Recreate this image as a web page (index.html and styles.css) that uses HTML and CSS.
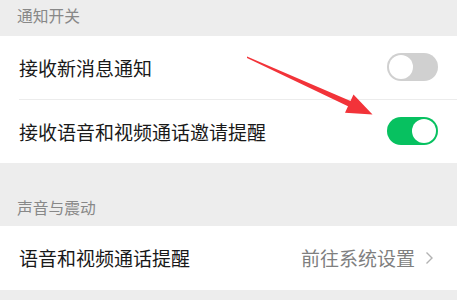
FILE: index.html
```html
<!DOCTYPE html>
<html lang="zh-CN">
<head>
  <meta charset="UTF-8">
  <title>新消息通知</title>
  <link rel="stylesheet" href="styles.css">
</head>
<body>
  <div class="page">
    <div class="section-title first">通知开关</div>
    <div class="group">
      <div class="row">
        <span class="label">接收新消息通知</span>
        <span class="switch"></span>
      </div>
      <div class="row">
        <span class="label">接收语音和视频通话邀请提醒</span>
        <span class="switch on"></span>
      </div>
    </div>

    <div class="section-title">声音与震动</div>
    <div class="group">
      <div class="row">
        <span class="label">语音和视频通话提醒</span>
        <span class="value">前往系统设置
          <svg class="chevron" width="9" height="14" viewBox="0 0 9 14">
            <path d="M1.5 1.5 L7 7 L1.5 12.5" fill="none" stroke="#b2b2b2" stroke-width="1.4"/>
          </svg>
        </span>
      </div>
    </div>

    <svg class="arrow" width="457" height="300" viewBox="0 0 457 300">
      <polygon points="247,56.5 350.5,100.9 353.5,94.5 372.5,114.5 345,112.7 348,106.3 247,58" fill="#f23339"/>
    </svg>
  </div>
</body>
</html>
```

FILE: styles.css
```css
* {
  box-sizing: border-box;
}

body {
  margin: 0;
  padding: 0;
  background: #ededed;
  font-family: 'Noto Sans CJK SC', 'Noto Sans', sans-serif;
}

.page {
  position: relative;
  width: 457px;
  height: 300px;
  overflow: hidden;
}

.section-title {
  padding: 35px 17px 8px;
  font-size: 15.75px;
  line-height: 20px;
  color: #888;
}

.section-title.first {
  padding-top: 6px;
  padding-bottom: 10px;
}

.group {
  background: #fff;
}

.row {
  height: 63.5px;
  margin-left: 19px;
  padding-right: 19px;
  display: flex;
  align-items: center;
  justify-content: space-between;
  border-bottom: 1px solid #ececec;
}

.row:last-child {
  border-bottom: none;
}

.label {
  font-size: 19px;
  color: #191919;
}

.switch {
  position: relative;
  width: 51px;
  height: 28px;
  border-radius: 14px;
  background: #d0d0d0;
}

.switch::after {
  content: '';
  position: absolute;
  top: 2px;
  left: 2px;
  width: 24px;
  height: 24px;
  border-radius: 50%;
  background: #fff;
}

.switch.on {
  background: #07c160;
}

.switch.on::after {
  left: 25px;
}

.value {
  display: flex;
  align-items: center;
  gap: 10px;
  font-size: 19px;
  color: #7f7f7f;
  margin-right: 4px;
}

.arrow {
  position: absolute;
  top: 0;
  left: 0;
  pointer-events: none;
}
```
